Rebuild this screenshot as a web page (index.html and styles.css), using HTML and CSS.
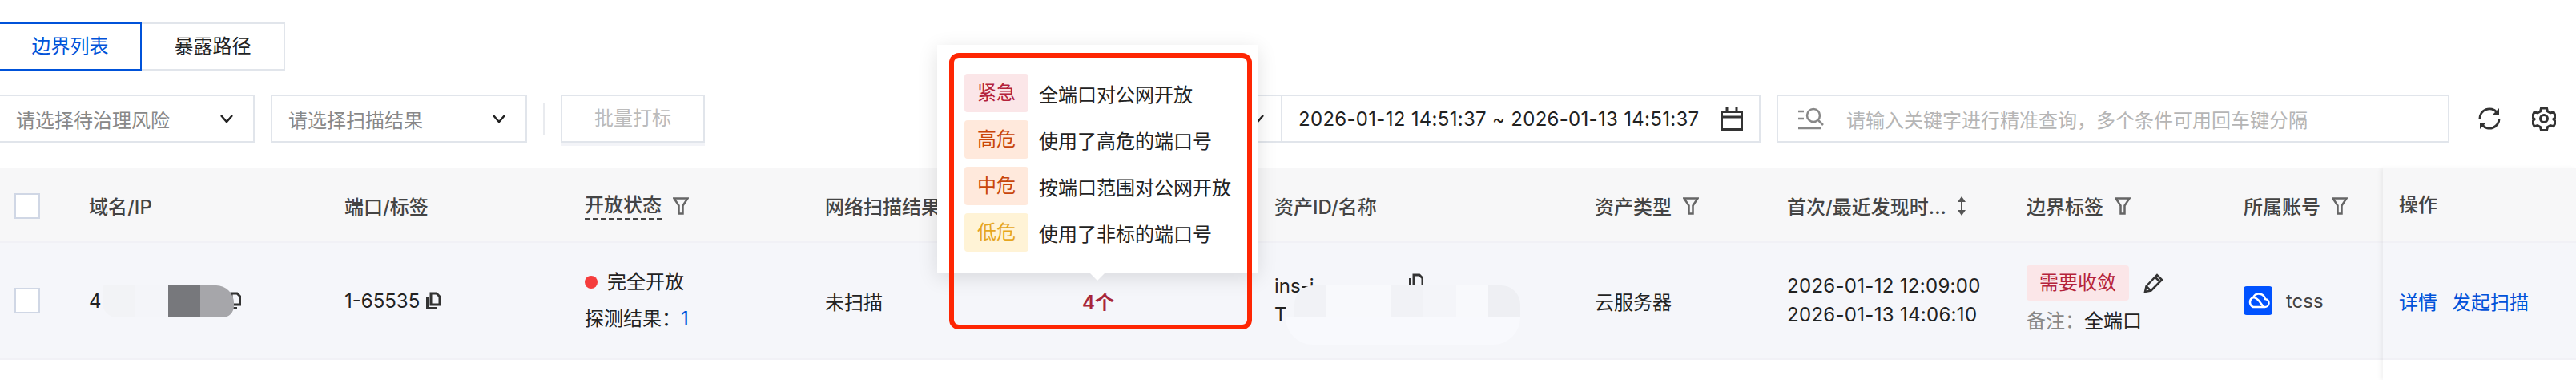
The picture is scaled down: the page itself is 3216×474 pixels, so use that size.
FILE: index.html
```html
<!DOCTYPE html>
<html lang="zh-CN">
<head>
    <meta charset="UTF-8">
    <title>边界列表</title>
    <link rel="stylesheet" href="styles.css">
</head>
<body>
    <div class="page">
        <div class="tabs">
            <div class="tab active">边界列表</div>
            <div class="tab">暴露路径</div>
        </div>

        <div class="toolbar">
            <div class="select first">
                <span>请选择待治理风险</span>
                <svg class="chevron" viewBox="0 0 18 12"><path d="M2 2l7 8 7-8"/></svg>
            </div>
            <div class="select">
                <span>请选择扫描结果</span>
                <svg class="chevron" viewBox="0 0 18 12"><path d="M2 2l7 8 7-8"/></svg>
            </div>
            <div class="divider"></div>
            <div class="btn-disabled">批量打标</div>

            <div class="range-type">
                <svg class="chevron" viewBox="0 0 18 12"><path d="M2 2l7 8 7-8"/></svg>
            </div>
            <div class="date-range">
                <span class="nums">2026-01-12 14:51:37 ~ 2026-01-13 14:51:37</span>
                <svg class="calendar" viewBox="0 0 28 30"><path d="M1.500 6.500h25v22h-25zM1.500 13h25M8 1v6M20 1v6"/></svg>
            </div>
            <div class="search">
                <svg class="search-icon" viewBox="0 0 32 28"><path d="M0 5h7M0 14h7M0 26h29"/><circle cx="19" cy="10" r="8"/><path d="M25 16l6 6"/></svg>
                <span>请输入关键字进行精准查询，多个条件可用回车键分隔</span>
            </div>
            <svg class="tool-icon refresh" viewBox="0 0 30 30"><path d="M3 15a12 12 0 0 1 21-8M27 15a12 12 0 0 1-21 8"/><path class="solid" d="M27 2v8h-8zM3 28v-8h8z"/></svg>
            <svg class="tool-icon gear" viewBox="0 0 30 30"><path d="M11.500 2h7l1 4 3.500 2 4-1.200 3 6-3 2.700v.500l3 2.700-3 6-4-1.200-3.500 2-1 4h-7l-1-4-3.500-2-4 1.200-3-6 3-2.700v-.500l-3-2.700 3-6 4 1.200 3.500-2z"/><circle cx="15" cy="15" r="4.500"/></svg>
        </div>

        <div class="table">
            <div class="table-body">
                <div class="head-row">
                    <div class="cell"><span class="checkbox"></span></div>
                    <div class="cell">域名/IP</div>
                    <div class="cell">端口/标签</div>
                    <div class="cell"><span class="dashed">开放状态</span><svg class="filter" viewBox="0 0 20 22"><path d="M1.500 1.500h17l-6 9v10h-5v-10z"/></svg></div>
                    <div class="cell">网络扫描结果</div>
                    <div class="cell"></div>
                    <div class="cell">资产ID/名称</div>
                    <div class="cell">资产类型<svg class="filter" viewBox="0 0 20 22"><path d="M1.500 1.500h17l-6 9v10h-5v-10z"/></svg></div>
                    <div class="cell">首次/最近发现时...<svg class="sort" viewBox="0 0 10 24"><path d="M5 3v18"/><path class="solid" d="M5 0l5 7H0zM5 24l5-7H0z"/></svg></div>
                    <div class="cell">边界标签<svg class="filter" viewBox="0 0 20 22"><path d="M1.500 1.500h17l-6 9v10h-5v-10z"/></svg></div>
                    <div class="cell">所属账号<svg class="filter" viewBox="0 0 20 22"><path d="M1.500 1.500h17l-6 9v10h-5v-10z"/></svg></div>
                </div>
                <div class="data-row">
                    <div class="cell"><span class="checkbox"></span></div>
                    <div class="cell">4<svg class="copy ip-copy" viewBox="0 0 18 22"><path d="M6 2h7l4 4v10H6zM1.500 6v14.500H13"/></svg></div>
                    <div class="cell">1-65535<svg class="copy" viewBox="0 0 18 22"><path d="M6 2h7l4 4v10H6zM1.500 6v14.500H13"/></svg></div>
                    <div class="cell stack">
                        <div class="status"><i class="dot"></i>完全开放</div>
                        <div>探测结果：<span class="link">1</span></div>
                    </div>
                    <div class="cell">未扫描</div>
                    <div class="cell risk-count">4个</div>
                    <div class="cell stack">
                        <div>ins-j<svg class="copy asset-copy" viewBox="0 0 18 22"><path d="M6 2h7l4 4v10H6zM1.500 6v14.500H13"/></svg></div>
                        <div>T</div>
                    </div>
                    <div class="cell">云服务器</div>
                    <div class="cell stack nums">
                        <div>2026-01-12 12:09:00</div>
                        <div>2026-01-13 14:06:10</div>
                    </div>
                    <div class="cell stack tag-cell">
                        <div class="tag-line">
                            <span class="tag">需要收敛</span>
                            <svg class="pencil" viewBox="0 0 26 26"><path d="M2 24l1.500-7L17 3l6 6L9.500 22.500zM14.500 5.500l6 6M3.500 17l5.500 5.500"/></svg>
                        </div>
                        <div><span class="muted">备注：</span>全端口</div>
                    </div>
                    <div class="cell account">
                        <span class="account-logo">
                            <svg viewBox="0 0 36 36"><path d="M12 26h14a5 5 0 0 0 1-10 8 8 0 0 0-15-2 6.500 6.500 0 0 0 0 12zM12 14c3 0 5 2 7 4l6 8"/></svg>
                        </span>
                        <span class="account-name">tcss</span>
                    </div>
                </div>
            </div>
            <div class="fixed-col">
                <div class="fixed-head">操作</div>
                <div class="fixed-cell"><span class="link">详情</span><span class="link">发起扫描</span></div>
            </div>
        </div>

        <!-- 打码区域 -->
        <div class="mask mask-ip">
            <span class="m1"></span><span class="m2"></span><span class="m3"></span><span class="m4"></span>
        </div>
        <div class="mask-asset">
            <div class="mask-line top">
                <span class="t1"></span><span class="t2"></span><span class="t2"></span><span class="t1"></span><span class="t3"></span><span class="t2"></span><span class="t4"></span>
            </div>
            <div class="mask-line bottom"></div>
        </div>

        <!-- 风险说明气泡 -->
        <div class="popover">
            <div class="risk-row"><span class="level urgent">紧急</span>全端口对公网开放</div>
            <div class="risk-row"><span class="level high">高危</span>使用了高危的端口号</div>
            <div class="risk-row"><span class="level high">中危</span>按端口范围对公网开放</div>
            <div class="risk-row"><span class="level low">低危</span>使用了非标的端口号</div>
        </div>
        <div class="callout"></div>
    </div>
</body>
</html>
```

FILE: styles.css
```css
* {
    box-sizing: border-box;
}
body {
    margin: 0;
    background: white;
    color: #222;
    font-family: Inter, "Noto Sans CJK SC", sans-serif;
    font-size: 24px;
}
.page {
    position: relative;
    width: 3216px;
    height: 474px;
    overflow: hidden;
}
svg {
    fill: none;
    stroke: currentColor;
    flex: none;
}
svg .solid {
    fill: currentColor;
    stroke: none;
}
.nums {
    letter-spacing: 0.3px;
}

/* tabs */
.tabs {
    display: flex;
    padding-top: 28px;
    margin-left: -2px;
}
.tab {
    width: 179px;
    height: 60px;
    line-height: 56px;
    text-align: center;
    border: 2px solid #e1e5eb;
    border-left: none;
}
.tab.active {
    width: 179px;
    border: 2px solid #0052d9;
    color: #0052d9;
}

/* toolbar */
.toolbar {
    display: flex;
    align-items: center;
    height: 60px;
    margin-top: 30px;
}
.select {
    display: flex;
    align-items: center;
    justify-content: space-between;
    width: 320px;
    height: 60px;
    padding: 0 24px 0 20px;
    border: 2px solid #e1e5eb;
    color: #888;
    margin-right: 20px;
}
.select.first {
    margin-left: -2px;
}
.chevron {
    width: 18px;
    height: 12px;
    stroke: #222;
    stroke-width: 2.500;
}
.divider {
    width: 2px;
    height: 40px;
    background: #e9ebef;
    margin-right: 20px;
}
.btn-disabled {
    width: 180px;
    height: 60px;
    line-height: 56px;
    text-align: center;
    color: #bbb;
    border: 2px solid #e1e5eb;
    box-shadow: 0 4px 0 #f3f4f8;
}
.range-type {
    display: flex;
    align-items: center;
    justify-content: flex-end;
    width: 220px;
    height: 60px;
    margin-left: 500px;
    padding-right: 20px;
    border: 2px solid #e1e5eb;
    border-right-width: 1px;
}
.date-range {
    display: flex;
    align-items: center;
    justify-content: space-between;
    width: 598px;
    height: 60px;
    padding: 0 20px 0 20px;
    border: 2px solid #e1e5eb;
    border-left-width: 1px;
}
.calendar {
    width: 28px;
    height: 30px;
    stroke: #333;
    stroke-width: 3;
}
.search {
    display: flex;
    align-items: center;
    width: 840px;
    height: 60px;
    margin-left: 20px;
    padding-left: 25px;
    border: 2px solid #e1e5eb;
    color: #b5b5b5;
}
.search-icon {
    width: 32px;
    height: 28px;
    stroke: #888;
    stroke-width: 2.500;
    margin-right: 28px;
}
.tool-icon {
    width: 30px;
    height: 30px;
    color: #333;
    stroke: #333;
    stroke-width: 3;
}
.refresh {
    margin-left: 35px;
}
.gear {
    margin-left: 38px;
}

/* table */
.table {
    display: flex;
    margin-top: 32px;
    height: 264px;
}
.table-body {
    width: 2975px;
}
.head-row,
.data-row {
    display: grid;
    grid-template-columns: 111px 319px 300px 300px 301px 260px 400px 240px 299px 271px 174px;
    background: #f7f7f8;
    height: 93px;
    border-bottom: 2px solid #f1f1f6;
    font-weight: 500;
    color: #444;
}
.data-row {
    background: #f5f6fa;
    height: 146px;
    font-weight: 400;
    color: #222;
}
.cell {
    display: flex;
    align-items: center;
    white-space: nowrap;
}
.head-row .cell {
    padding-top: 2px;
}
.cell .checkbox {
    width: 32px;
    height: 32px;
    margin-left: 18px;
    background: white;
    border: 2px solid #d0d7e5;
}
.cell.stack {
    flex-direction: column;
    align-items: flex-start;
    justify-content: center;
    line-height: 36px;
}
.dashed {
    border-bottom: 2px dashed #444;
    line-height: 32px;
}
.filter {
    width: 20px;
    height: 22px;
    margin-left: 14px;
    stroke: #666;
    stroke-width: 2.500;
}
.sort {
    width: 10px;
    height: 24px;
    margin-left: 14px;
    color: #555;
    stroke: #555;
    stroke-width: 2;
}
.copy {
    width: 18px;
    height: 22px;
    margin-left: 8px;
    stroke: #333;
    stroke-width: 3;
}
.ip-copy {
    margin-left: 156px;
}
.asset-copy {
    margin-left: 118px;
    vertical-align: 2px;
}
.stack .status {
    display: flex;
    align-items: center;
    margin-bottom: 10px;
}
.dot {
    width: 16px;
    height: 16px;
    border-radius: 50%;
    background: #f53c3c;
    margin-right: 12px;
}
.link {
    color: #0052d9;
}
.risk-count {
    padding-left: 20px;
    color: #a8263b;
    font-weight: 600;
}
.tag-line {
    display: flex;
    align-items: center;
    margin-bottom: 8px;
}
.tag {
    width: 128px;
    height: 44px;
    line-height: 44px;
    text-align: center;
    border-radius: 4px;
    background: #fbe6e8;
    color: #b4233b;
}
.pencil {
    width: 26px;
    height: 26px;
    margin-left: 18px;
    stroke: #333;
    stroke-width: 2.500;
}
.muted {
    color: #888;
}
.account-logo {
    width: 36px;
    height: 36px;
    border-radius: 4px;
    background: #0052ff;
}
.account-logo svg {
    display: block;
    width: 36px;
    height: 36px;
    stroke: white;
    stroke-width: 2.500;
}
.account-name {
    margin-left: 17px;
    color: #444;
}

/* fixed column */
.fixed-col {
    flex: 1;
    background: white;
    box-shadow: -3px 0 5px rgba(0,0,0,0.05);
}
.fixed-head {
    height: 93px;
    padding: 0 0 0 20px;
    line-height: 92px;
    font-weight: 500;
    color: #444;
    background: #f7f7f8;
    border-bottom: 2px solid #f1f1f6;
}
.fixed-cell {
    display: flex;
    gap: 18px;
    align-items: center;
    height: 146px;
    padding-left: 20px;
    background: #f5f6fa;
    border-bottom: 2px solid #f1f1f6;
}

/* masks */
.mask {
    position: absolute;
    left: 128px;
    top: 356px;
    display: flex;
    width: 164px;
    height: 40px;
    overflow: hidden;
    border-radius: 2px 22px 14px 18px;
}
.mask span {
    height: 40px;
}
.m1 { width: 40px; background: #f2f3f6; }
.m2 { width: 42px; background: #f4f5f9; }
.m3 { width: 40px; background: #77787c; }
.m4 { width: 42px; background: #a6a6aa; }
.mask-asset {
    position: absolute;
    left: 1605px;
    top: 356px;
    width: 293px;
}
.mask-line.top {
    display: flex;
    height: 40px;
    margin-left: 11px;
    overflow: hidden;
    border-radius: 24px 24px 0 0;
}
.mask-line.top span {
    height: 40px;
}
.t1 { width: 40px; background: #f1f2f6; }
.t2 { width: 40px; background: #f8f9fc; }
.t3 { width: 42px; background: #f4f5f9; }
.t4 { width: 40px; background: #eeeff3; }
.mask-line.bottom {
    height: 34px;
    background: #f8f9fd;
    border-radius: 0 0 40px 40px;
}

/* popover */
.popover {
    position: absolute;
    left: 1170px;
    top: 56px;
    width: 400px;
    height: 284px;
    padding: 36px 0 0 34px;
    background: white;
    box-shadow: 0 6px 24px rgba(0,0,0,0.12);
}
.popover::after {
    content: "";
    position: absolute;
    left: 190px;
    bottom: -10px;
    border-left: 10px solid transparent;
    border-right: 10px solid transparent;
    border-top: 10px solid white;
}
.risk-row {
    display: flex;
    align-items: center;
    height: 48px;
    margin-bottom: 10px;
}
.level {
    width: 80px;
    height: 48px;
    line-height: 48px;
    margin-right: 13px;
    text-align: center;
    border-radius: 4px;
}
.urgent {
    background: #fbe6e8;
    color: #b4233b;
}
.high {
    background: #ffe9dc;
    color: #c8450a;
}
.low {
    background: #fff3d6;
    color: #e6a61e;
}
.callout {
    position: absolute;
    left: 1185px;
    top: 66px;
    width: 378px;
    height: 345px;
    border: 6px solid #fe2603;
    border-radius: 12px;
}
```
